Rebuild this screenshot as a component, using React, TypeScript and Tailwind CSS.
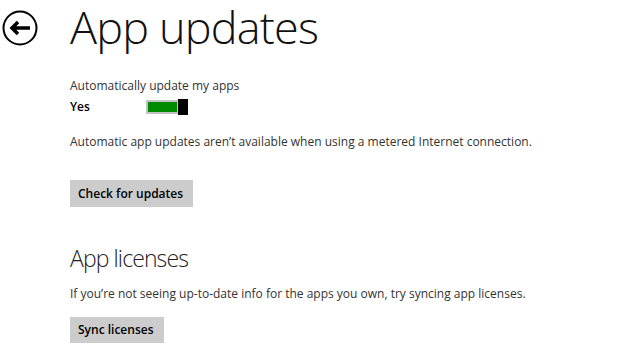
import React from 'react';

const BackButton = () => (
    <svg className="w-9 h-9 ml-[2px] mt-[10px] shrink-0" viewBox="0 0 36 36" fill="none" stroke="#000">
        <circle cx="18" cy="18" r="16.5" strokeWidth="2" />
        <path d="M28 18H10M16 12l-6 6 6 6" strokeWidth="3.5" strokeLinecap="butt" strokeLinejoin="miter" />
    </svg>
);

const Toggle = () => (
    <div className="flex items-center">
        <div className="w-[33px] h-[14px] border-2 border-[#c2c2c2] bg-[#008a00]"></div>
        <div className="w-[10px] h-[16px] bg-black -ml-[1px]"></div>
    </div>
);

const GrayButton = ({ label, h }: { label: string, h: string }) => (
    <button className={`${h} pl-[8px] pr-[10px] bg-[#cccccc] text-black text-[12px] font-semibold flex items-center`}>
        {label}
    </button>
);

const App: React.FC = () => {
    return (
        <div className="w-[640px] h-[359px] bg-white overflow-hidden text-[#333] font-['Open_Sans',sans-serif]">
            <div className="flex items-start">
                <BackButton />
                <h1 className="ml-[32px] pr-[4px] text-[45px] leading-[54px] tracking-[-0.8px] font-light text-[#111] whitespace-nowrap">App updates</h1>
            </div>
            <div className="pl-[70px] flex flex-col items-start">
                <p className="mt-[24px] text-[12px] leading-[16px]">Automatically update my apps</p>
                <div className="mt-[5px] flex items-center h-[16px]">
                    <span className="w-[76px] text-[12px] leading-[16px] font-semibold text-black">Yes</span>
                    <Toggle />
                </div>
                <p className="mt-[19px] text-[12px] leading-[16px]">Automatic app updates aren’t available when using a metered Internet connection.</p>
                <div className="mt-[30px]">
                    <GrayButton label="Check for updates" h="h-[27px]" />
                </div>
                <h2 className="mt-[35px] text-[23px] leading-[32px] tracking-[-0.9px] font-light text-[#222]">App licenses</h2>
                <p className="mt-[12px] text-[12px] leading-[16px]">If you’re not seeing up-to-date info for the apps you own, try syncing app licenses.</p>
                <div className="mt-[15px]">
                    <GrayButton label="Sync licenses" h="h-[26px]" />
                </div>
            </div>
        </div>
    );
};

export default App;
